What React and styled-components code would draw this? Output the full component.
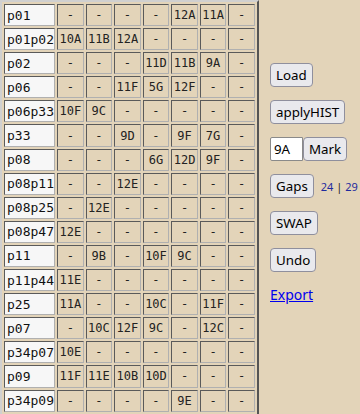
import React from "react";
import styled, { createGlobalStyle } from "styled-components";

const GlobalStyle = createGlobalStyle`
  html, body {
    margin: 0;
    padding: 0;
    background: #e3d4b9;
    overflow: hidden;
  }
`;

const Page = styled.div`
  display: flex;
  align-items: flex-start;
  gap: 11px;
`;

const Grid = styled.table`
  border: 2px solid;
  border-color: #d0d0d0 #555 #555 #d0d0d0;
  border-spacing: 2px;
  table-layout: fixed;
  width: 259px;
`;

const Cell = styled.td`
  box-sizing: border-box;
  height: 22.1px;
  padding: 0;
  border: 1px solid;
  border-color: #5a5a5a #b0b0b0 #b0b0b0 #5a5a5a;
  text-align: center;
  font-family: "DejaVu Sans Mono", monospace;
  font-size: 12px;
  color: #222;
  background: #e3d4b9;
`;

const NameCell = styled(Cell)`
  width: 51px;
  text-align: left;
  padding-left: 2px;
  font-size: 13px;
  color: #111;
  background: #f7f7f7;
  white-space: nowrap;
  overflow: hidden;
`;

const Side = styled.div`
  display: flex;
  flex-direction: column;
  align-items: flex-start;
  gap: 13px;
  padding-top: 63px;
`;

const Button = styled.button`
  box-sizing: border-box;
  height: 24px;
  padding: 0 5px;
  border: 1px solid #8f8f9d;
  border-radius: 4px;
  background: #e9e9ed;
  color: #000;
  font-family: "Noto Sans", sans-serif;
  font-size: 13.33px;
`;

const Row = styled.div`
  display: flex;
  align-items: center;
  gap: ${(p) => p.$gap || 0}px;
`;

const Field = styled.input`
  box-sizing: border-box;
  width: 33px;
  height: 24px;
  padding: 0 3px;
  border: 1px solid #8a8a8a;
  border-radius: 2px 0 0 2px;
  background: #fff;
  font-family: "Noto Sans", sans-serif;
  font-size: 13.33px;
  color: #000;
`;

const Count = styled.span`
  font-family: "Noto Sans", sans-serif;
  font-size: 11px;
  color: #222;
  b {
    font-weight: normal;
    color: #1e2a9e;
  }
`;

const ExportLink = styled.a`
  font-family: "Noto Sans", sans-serif;
  font-size: 14px;
  color: #0000ee;
  text-decoration: underline;
`;

const rows = [
  ["p01", "-", "-", "-", "-", "12A", "11A", "-"],
  ["p01p02", "10A", "11B", "12A", "-", "-", "-", "-"],
  ["p02", "-", "-", "-", "11D", "11B", "9A", "-"],
  ["p06", "-", "-", "11F", "5G", "12F", "-", "-"],
  ["p06p33", "10F", "9C", "-", "-", "-", "-", "-"],
  ["p33", "-", "-", "9D", "-", "9F", "7G", "-"],
  ["p08", "-", "-", "-", "6G", "12D", "9F", "-"],
  ["p08p11", "-", "-", "12E", "-", "-", "-", "-"],
  ["p08p25", "-", "12E", "-", "-", "-", "-", "-"],
  ["p08p47", "12E", "-", "-", "-", "-", "-", "-"],
  ["p11", "-", "9B", "-", "10F", "9C", "-", "-"],
  ["p11p44", "11E", "-", "-", "-", "-", "-", "-"],
  ["p25", "11A", "-", "-", "10C", "-", "11F", "-"],
  ["p07", "-", "10C", "12F", "9C", "-", "12C", "-"],
  ["p34p07", "10E", "-", "-", "-", "-", "-", "-"],
  ["p09", "11F", "11E", "10B", "10D", "-", "-", "-"],
  ["p34p09", "-", "-", "-", "-", "9E", "-", "-"],
];

export default function App() {
  return (
    <Page>
      <GlobalStyle />
      <Grid>
        <tbody>
          {rows.map(([name, ...slots]) => (
            <tr key={name}>
              <NameCell>{name}</NameCell>
              {slots.map((s, i) => (
                <Cell key={i}>{s}</Cell>
              ))}
            </tr>
          ))}
        </tbody>
      </Grid>
      <Side>
        <Button>Load</Button>
        <Button>applyHIST</Button>
        <Row>
          <Field defaultValue="9A" />
          <Button>Mark</Button>
        </Row>
        <Row $gap={7}>
          <Button>Gaps</Button>
          <Count>
            <b>24</b> | <b>29</b>
          </Count>
        </Row>
        <Button>SWAP</Button>
        <Button>Undo</Button>
        <ExportLink href="#">Export</ExportLink>
      </Side>
    </Page>
  );
}
